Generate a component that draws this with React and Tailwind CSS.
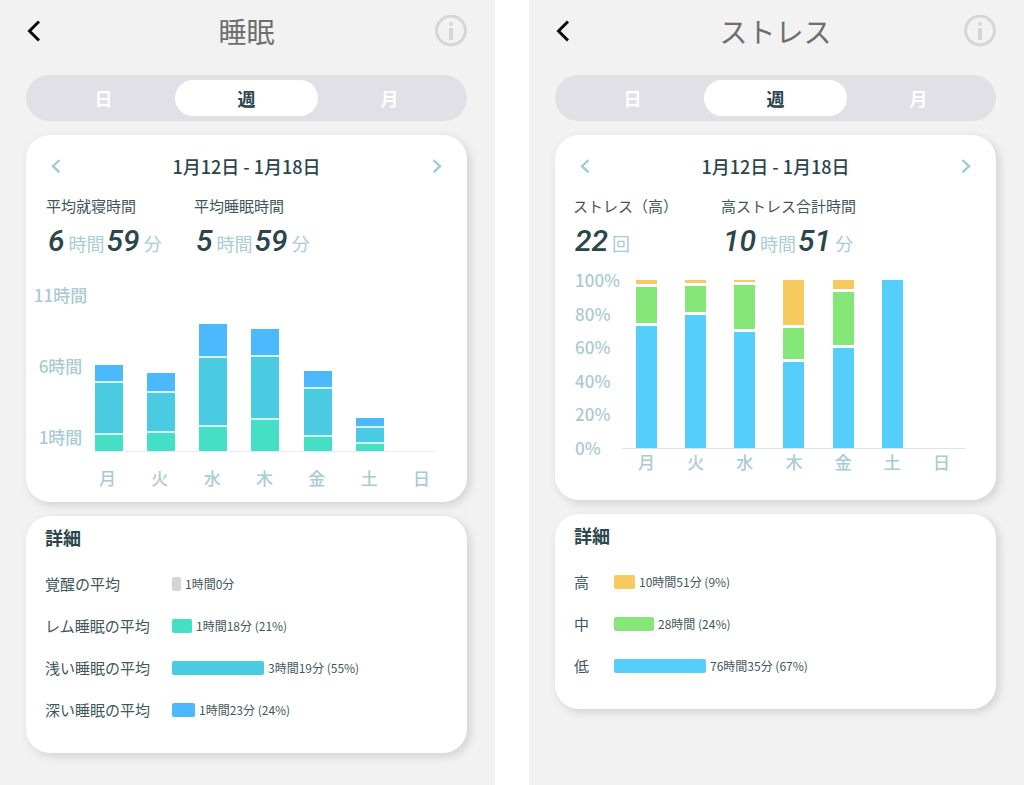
import React, { useState } from 'react';
import { clsx } from 'clsx';

const days = ['月', '火', '水', '木', '金', '土', '日'];

const periods = ['日', '週', '月'];

// Segment heights in px, listed from the top of the bar to the bottom
const sleepBars = [
  [16, 50, 16],
  [18, 38, 18],
  [32, 67, 24],
  [26, 61, 31],
  [16, 46, 14],
  [8, 14, 7],
  [],
];

const stressBars = [
  [4, 36, 122],
  [3, 26, 133],
  [2, 44, 116],
  [45, 31, 86],
  [9, 53, 100],
  [0, 0, 168],
  [],
];

const sleepColors = ['bg-[#4db9fd]', 'bg-[#4bcbe1]', 'bg-[#45dfc5]'];
const stressColors = ['bg-[#f7ca60]', 'bg-[#85e777]', 'bg-[#56cefc]'];

const sleepDetails = [
  { label: '覚醒の平均', value: '1時間0分', width: 9, color: 'bg-[#d5d5d5]' },
  { label: 'レム睡眠の平均', value: '1時間18分 (21%)', width: 20, color: 'bg-[#45dfc5]' },
  { label: '浅い睡眠の平均', value: '3時間19分 (55%)', width: 92, color: 'bg-[#4bcbe1]' },
  { label: '深い睡眠の平均', value: '1時間23分 (24%)', width: 23, color: 'bg-[#4db9fd]' },
];

const stressDetails = [
  { label: '高', value: '10時間51分 (9%)', width: 21, color: 'bg-[#f7ca60]' },
  { label: '中', value: '28時間 (24%)', width: 40, color: 'bg-[#85e777]' },
  { label: '低', value: '76時間35分 (67%)', width: 92, color: 'bg-[#56cefc]' },
];

const Header = ({ title }) => (
  <header className="h-[62px] flex items-center justify-between">
    <button type="button" aria-label="戻る" className="w-8 h-8">
      <svg viewBox="0 0 32 32" className="w-8 h-8" fill="none" stroke="#0a0a0a" strokeWidth="3">
        <path d="M13 6.5 3.5 16l9.5 9.5" />
      </svg>
    </button>
    <h1 className="text-[28px] leading-10 text-[#6e6e6e]">{title}</h1>
    <button type="button" aria-label="情報" className="w-8 h-8">
      <svg viewBox="0 0 32 32" className="w-8 h-8" fill="none" stroke="#d6d6d9">
        <circle cx="16" cy="15.5" r="14.4" strokeWidth="3" />
        <path d="M16 13v12" strokeWidth="4" />
        <circle cx="16" cy="9" r="2" fill="#d6d6d9" stroke="none" />
      </svg>
    </button>
  </header>
);

const PeriodTabs = () => {
  const [active, setActive] = useState('週');

  return (
    <div className="mt-[13px] h-[46px] px-1.5 flex items-center rounded-full bg-[#e1e0e7]">
      {periods.map((period) => (
        <button
          key={period}
          type="button"
          aria-pressed={period === active}
          onClick={() => setActive(period)}
          className={clsx(
            'flex-1 h-9 rounded-full text-lg leading-9 font-bold',
            period === active ? 'bg-white text-[#2b464b]' : 'text-white'
          )}
        >
          {period}
        </button>
      ))}
    </div>
  );
};

const Card = ({ className, children }) => (
  <section
    className={clsx(
      'mt-3.5 rounded-[24px] bg-white shadow-[3px_3px_10px_rgba(0,0,0,0.14)]',
      className
    )}
  >
    {children}
  </section>
);

const DateNav = () => (
  <div className="px-5 h-7 flex items-center justify-between">
    <button type="button" aria-label="前の週" className="w-5 h-5">
      <svg viewBox="0 0 20 20" className="w-5 h-5" fill="none" stroke="#9fcbd3" strokeWidth="2.4">
        <path d="M13.5 4 7 10.2l6.5 6.2" />
      </svg>
    </button>
    <p className="text-lg leading-7 font-medium">1月12日 - 1月18日</p>
    <button type="button" aria-label="次の週" className="w-5 h-5">
      <svg viewBox="0 0 20 20" className="w-5 h-5" fill="none" stroke="#9fcbd3" strokeWidth="2.4">
        <path d="m6.5 4 6.5 6.2-6.5 6.2" />
      </svg>
    </button>
  </div>
);

const Stat = ({ label, parts }) => (
  <div className="min-w-[148px]">
    <dt className="text-[15px] leading-5 text-[#3f575c]">{label}</dt>
    <dd className="mt-[7px] pl-0.5 h-9 flex items-baseline gap-0.5">
      {parts.map(([number, unit]) => (
        <span key={unit} className="flex items-baseline gap-1">
          <span className="font-[Roboto,sans-serif] text-[30px] leading-9 font-medium italic">
            {number}
          </span>
          <span className="text-lg leading-6 text-[#a9cdd4]">{unit}</span>
        </span>
      ))}
    </dd>
  </div>
);

const Bars = ({ bars, colors, barClass }) =>
  bars.map((segments, i) => (
    <div key={days[i]} className={clsx('flex flex-col', barClass)}>
      {segments.map((height, j) =>
        height > 0 ? <div key={colors[j]} className={colors[j]} style={{ height }} /> : null
      )}
    </div>
  ));

const DayLabels = ({ className }) => (
  <div className={clsx('flex justify-between', className)}>
    {days.map((day) => (
      <span key={day}>{day}</span>
    ))}
  </div>
);

const SleepChart = () => (
  <div className="mt-6 pl-1.5 pr-[31px] flex text-[17px] leading-6 font-medium text-[#a9cbd2]">
    <div className="w-[57px] h-[166px] flex flex-col justify-between items-center">
      <span>11時間</span>
      <span>6時間</span>
      <span>1時間</span>
    </div>
    <div className="flex-1 ml-1.5">
      <div className="h-[169px] flex items-end justify-between border-b border-[#e6eeef]">
        <Bars bars={sleepBars} colors={sleepColors} barClass="w-7 gap-0.5 bg-[#d5f3f7]" />
      </div>
      <DayLabels className="mt-3.5 pl-1 pr-1.5" />
    </div>
  </div>
);

const StressChart = () => (
  <div className="mt-[9px] pl-5 pr-[30px] flex text-[17px] leading-6 font-medium text-[#a9cbd2]">
    <div className="w-[47px] h-48 flex flex-col justify-between">
      {['100%', '80%', '60%', '40%', '20%', '0%'].map((tick) => (
        <span key={tick}>{tick}</span>
      ))}
    </div>
    <div className="flex-1 pt-3">
      <div className="h-[169px] px-3.5 flex items-end justify-between border-b border-[#dbe4e7]">
        <Bars bars={stressBars} colors={stressColors} barClass="w-[21px] gap-[3px]" />
      </div>
      <DayLabels className="mt-px px-4" />
    </div>
  </div>
);

const Details = ({ rows, labelClass }) => (
  <Card className="pt-[7px] pb-[22px] px-[19px]">
    <h2 className="text-lg leading-7 font-bold">詳細</h2>
    <dl className="mt-3 text-[#3f575c]">
      {rows.map(({ label, value, width, color }) => (
        <div key={label} className="h-[42px] flex items-center">
          <dt className={clsx('text-[15px] leading-5', labelClass)}>{label}</dt>
          <dd className="flex items-center gap-1 text-xs">
            <span className={clsx('h-3.5 rounded-xs', color)} style={{ width }} />
            {value}
          </dd>
        </div>
      ))}
    </dl>
  </Card>
);

const Screen = ({ title, children }) => (
  <main className="flex-1 min-h-screen pl-[26px] pr-7 pb-8 bg-[#f2f2f2] text-[#2b464b]">
    <Header title={title} />
    <PeriodTabs />
    {children}
  </main>
);

const App = () => {
  return (
    <div
      lang="ja"
      className="flex gap-[34px] bg-white font-['Noto_Sans_CJK_JP',sans-serif]"
    >
      {/* Sleep */}
      <Screen title="睡眠">
        <Card className="pt-[17px] pb-3">
          <DateNav />
          <dl className="mt-4 px-5 flex">
            <Stat label="平均就寝時間" parts={[['6', '時間'], ['59', '分']]} />
            <Stat label="平均睡眠時間" parts={[['5', '時間'], ['59', '分']]} />
          </dl>
          <SleepChart />
        </Card>
        <Details rows={sleepDetails} labelClass="w-[127px]" />
      </Screen>

      {/* Stress */}
      <Screen title="ストレス">
        <Card className="pt-[17px] pb-[26px]">
          <DateNav />
          <dl className="mt-4 px-[18px] flex">
            <Stat label="ストレス（高）" parts={[['22', '回']]} />
            <Stat label="高ストレス合計時間" parts={[['10', '時間'], ['51', '分']]} />
          </dl>
          <StressChart />
        </Card>
        <Details rows={stressDetails} labelClass="w-10" />
      </Screen>
    </div>
  );
};

export default App;
